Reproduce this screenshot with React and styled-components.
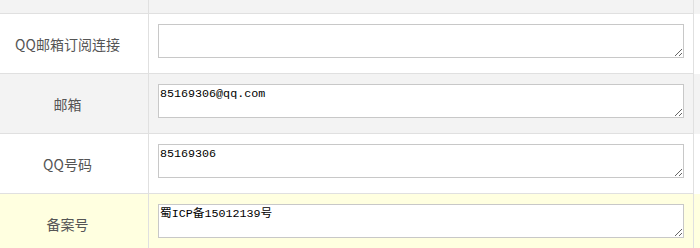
import React from 'react';
import styled, { createGlobalStyle } from 'styled-components';

const GlobalStyle = createGlobalStyle`
  html, body {
    margin: 0;
    padding: 0;
    background: #fff;
    overflow: hidden;
  }
`;

const rowColors = {
  white: '#ffffff',
  gray: '#f3f3f3',
  hover: '#ffffe0',
};

const rows = [
  { label: 'QQ邮箱订阅连接', value: '', tone: 'white' },
  { label: '邮箱', value: '85169306@qq.com', tone: 'gray' },
  { label: 'QQ号码', value: '85169306', tone: 'white' },
  { label: '备案号', value: '蜀ICP备15012139号', tone: 'hover' },
];

export default function App() {
  return (
    <>
      <GlobalStyle />
      <FormTable>
        <Row tone="gray" $height={14}>
          <LabelCell />
          <FieldCell />
          <EdgeCell />
        </Row>
        {rows.map(row => (
          <Row key={row.label} tone={row.tone} $height={60}>
            <LabelCell>{row.label}</LabelCell>
            <FieldCell>
              <Field defaultValue={row.value} />
            </FieldCell>
            <EdgeCell />
          </Row>
        ))}
      </FormTable>
    </>
  );
}

const FormTable = styled.div`
  width: 700px;
  font-family: 'Noto Sans CJK SC', 'Noto Sans', sans-serif;
`;

const Row = styled.div`
  display: grid;
  grid-template-columns: 149px 545px 1fr;
  height: ${p => p.$height}px;
  background: ${p => rowColors[p.tone]};
`;

const LabelCell = styled.div`
  box-sizing: border-box;
  display: flex;
  align-items: center;
  justify-content: center;
  padding: 1px 13px 0 0;
  border-right: 1px solid #e0e0e0;
  border-bottom: 1px solid #e0e0e0;
  font-size: 14px;
  color: #555;
`;

const FieldCell = styled.div`
  box-sizing: border-box;
  padding: 10px 0 0 9px;
  border-right: 1px solid #e0e0e0;
  border-bottom: 1px solid #e0e0e0;
`;

const EdgeCell = styled.div``;

const Field = styled.textarea`
  box-sizing: border-box;
  display: block;
  width: 526px;
  height: 34px;
  margin: 0;
  padding: 2px 1px;
  border: 1px solid #c8c8c8;
  background: #fff;
  font-family: 'Liberation Mono', 'Noto Sans CJK SC', monospace;
  font-size: 11.7px;
  line-height: 14px;
  color: #000;
  outline: none;
`;
